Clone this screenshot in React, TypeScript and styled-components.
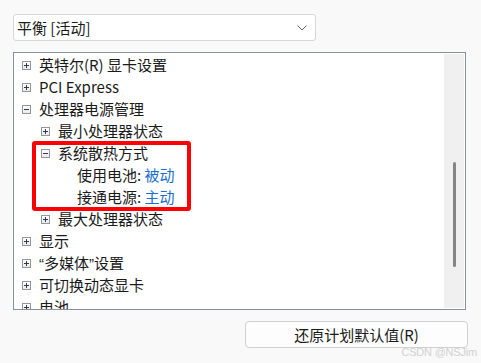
import React from "react";
import styled, {createGlobalStyle} from "styled-components";

const GlobalStyle = createGlobalStyle`
  html, body {
    margin: 0;
    padding: 0;
    background: #f9f9f9;
  }
  body {
    font-family: "Noto Sans CJK SC", "Noto Sans", sans-serif;
    color: #1a1a1a;
  }
`

const Page = styled.main`
  position: relative;
  width: 481px;
  height: 363px;
  box-sizing: border-box;
  padding: 14px 14px 0 13px;
  display: flex;
  flex-direction: column;
  overflow: hidden;
`

const Select = styled.div`
  width: 303px;
  height: 27px;
  box-sizing: border-box;
  border: 1px solid #d6d6d6;
  border-radius: 3px;
  background: #ffffff;
  display: flex;
  align-items: center;
  justify-content: space-between;
  padding: 0 8px 0 3px;
  font-size: 15px;
  line-height: 20px;
`

const TreeBox = styled.section`
  position: relative;
  margin-top: 11px;
  width: 453px;
  height: 258px;
  box-sizing: border-box;
  border: 1px solid #8b9099;
  background: #ffffff;
  display: flex;
  flex-direction: row;
`

const TreeList = styled.ul`
  flex: 1;
  list-style: none;
  margin: 0;
  padding: 1px 0 0 8px;
  overflow: hidden;
`

const Row = styled.li<{ $level: number }>`
  height: 22px;
  display: flex;
  align-items: center;
  gap: 8px;
  padding-left: ${p => p.$level * 19}px;
  font-size: 15px;
  line-height: 22px;
  white-space: nowrap;
`

const Toggle = styled.span<{ $empty?: boolean }>`
  width: 9px;
  height: 9px;
  flex: none;
  box-sizing: border-box;
  border: ${p => p.$empty ? "none" : "1px solid #969696"};
  background: ${p => p.$empty ? "transparent" : "linear-gradient(#ffffff, #e9e9e9)"};
  display: flex;
  align-items: center;
  justify-content: center;
`

const Value = styled.span`
  color: #1b6fd0;
`

const Quote = styled.span`
  font-family: "Liberation Sans", Arial, sans-serif;
`

const Track = styled.div`
  width: 20px;
  margin: 1px 1px 1px 0;
  background: #f0f0f0;
  display: flex;
  justify-content: center;
  padding-top: 108px;
  box-sizing: border-box;
`

const Thumb = styled.div`
  width: 3px;
  height: 105px;
  border-radius: 2px;
  background: #858585;
`

const Highlight = styled.div`
  position: absolute;
  left: 18px;
  top: 88px;
  width: 159px;
  height: 70px;
  box-sizing: border-box;
  border: 4px solid #ff0000;
  border-radius: 3px;
  pointer-events: none;
`

const Footer = styled.div`
  display: flex;
  justify-content: flex-end;
  margin-top: 11px;
  margin-right: -1px;
`

const Button = styled.button`
  width: 223px;
  height: 27px;
  box-sizing: border-box;
  border: 1px solid #d0d0d0;
  border-radius: 4px;
  background: #fdfdfd;
  font-family: inherit;
  font-size: 15px;
  line-height: 20px;
  color: #1a1a1a;
  padding: 0;
`

const Watermark = styled.span`
  position: absolute;
  right: 4px;
  bottom: 5px;
  font-family: "Liberation Sans", Arial, sans-serif;
  font-size: 11px;
  color: #d2d2d2;
  letter-spacing: -0.2px;
`

type Node = {
    level: number
    kind: "plus" | "minus" | "leaf"
    label: React.ReactNode
    value?: string
}

const nodes: Node[] = [
    {level: 0, kind: "plus", label: "英特尔(R) 显卡设置"},
    {level: 0, kind: "plus", label: "PCI Express"},
    {level: 0, kind: "minus", label: "处理器电源管理"},
    {level: 1, kind: "plus", label: "最小处理器状态"},
    {level: 1, kind: "minus", label: "系统散热方式"},
    {level: 2, kind: "leaf", label: "使用电池:", value: "被动"},
    {level: 2, kind: "leaf", label: "接通电源:", value: "主动"},
    {level: 1, kind: "plus", label: "最大处理器状态"},
    {level: 0, kind: "plus", label: "显示"},
    {level: 0, kind: "plus", label: <><Quote>“</Quote>多媒体<Quote>”</Quote>设置</>},
    {level: 0, kind: "plus", label: "可切换动态显卡"},
    {level: 0, kind: "plus", label: "电池"},
]

const Sign = ({minus}: { minus: boolean }) => (
    <svg width="7" height="7" viewBox="0 0 7 7">
        <path d="M1 3.5H6" stroke="#2e3a55" strokeWidth="1"/>
        {!minus && <path d="M3.5 1V6" stroke="#2e3a55" strokeWidth="1"/>}
    </svg>
)

const App = () => {
    return (
        <Page>
            <GlobalStyle/>
            <Select>
                <span>平衡 [活动]</span>
                <svg width="10" height="6" viewBox="0 0 10 6">
                    <path d="M0.5 0.5L5 5L9.5 0.5" fill="none" stroke="#666" strokeWidth="1"/>
                </svg>
            </Select>
            <TreeBox>
                <TreeList>
                    {nodes.map((n, i) => (
                        <Row key={i} $level={n.level}>
                            <Toggle $empty={n.kind === "leaf"}>
                                {n.kind !== "leaf" && <Sign minus={n.kind === "minus"}/>}
                            </Toggle>
                            <span>
                                {n.label}
                                {n.value && <> <Value>{n.value}</Value></>}
                            </span>
                        </Row>
                    ))}
                </TreeList>
                <Track>
                    <Thumb/>
                </Track>
                <Highlight/>
            </TreeBox>
            <Footer>
                <Button>还原计划默认值(R)</Button>
            </Footer>
            <Watermark>CSDN @NSJim</Watermark>
        </Page>
    );
}

export default App;
